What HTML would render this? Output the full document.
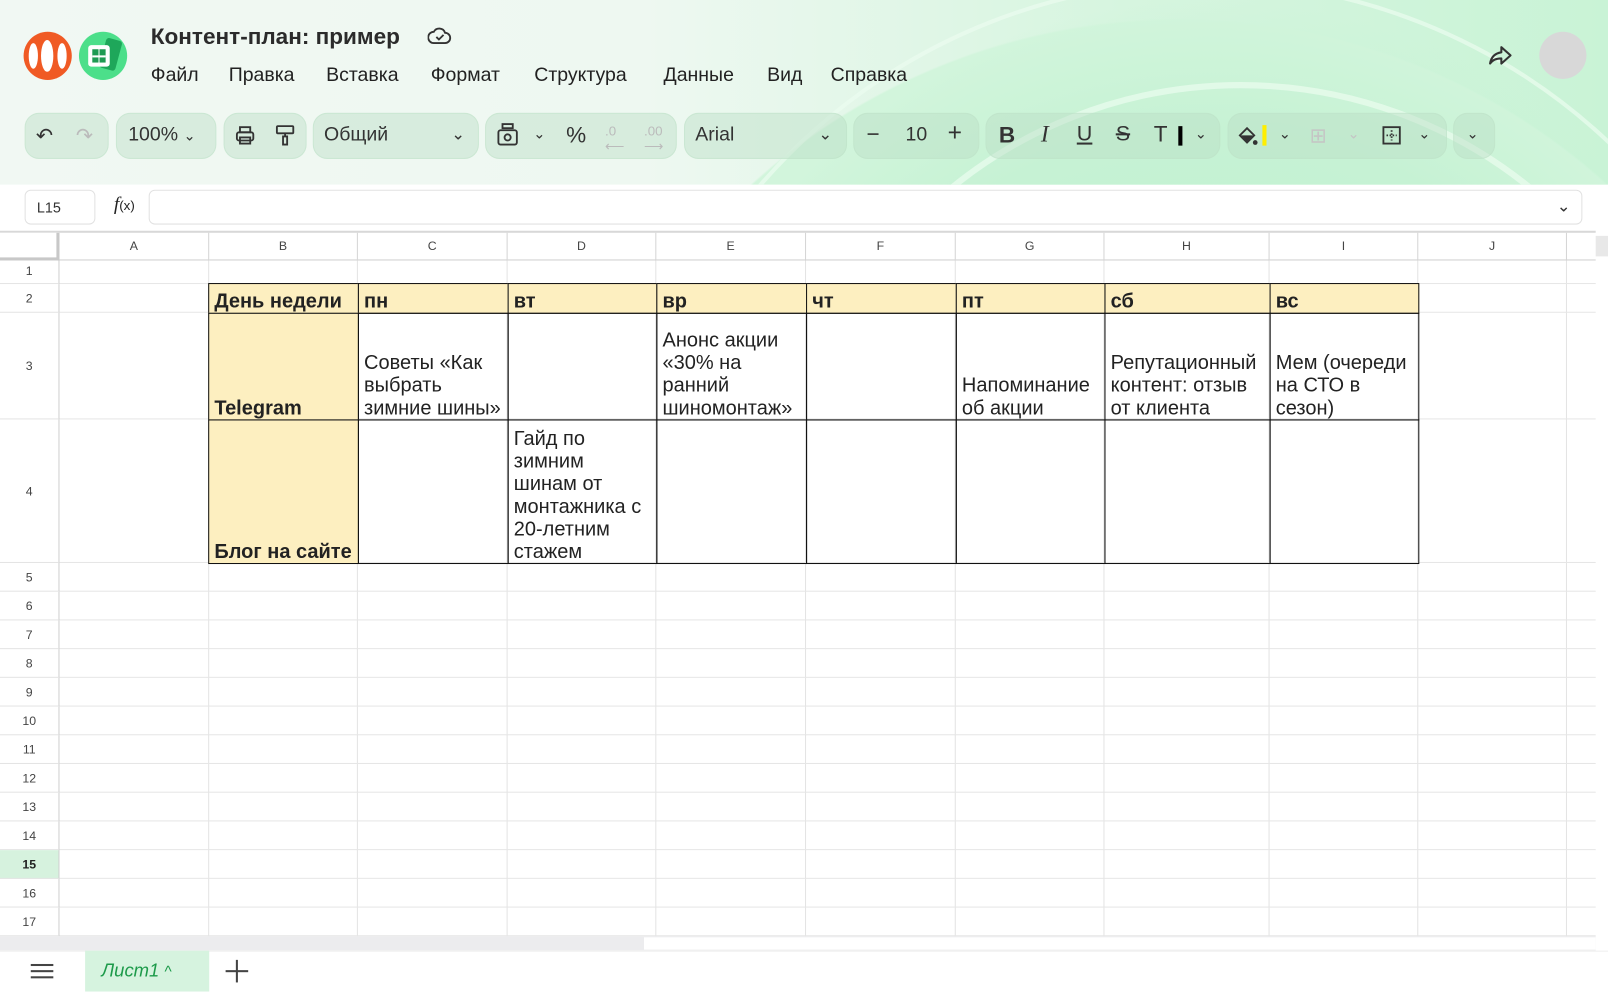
<!DOCTYPE html>
<html><head><meta charset="utf-8">
<style>
*{box-sizing:border-box;margin:0;padding:0}
html,body{width:1608px;height:992px;overflow:hidden;background:#fff}
#w{position:absolute;left:0;top:0;width:1568px;height:967px;transform:scale(1.02551);transform-origin:0 0;font-family:"Liberation Sans","Noto Sans CJK SC",sans-serif;color:#222;overflow:hidden}
.a{position:absolute}
#hd{left:0;top:0;width:1568px;height:180px;overflow:hidden;
background:radial-gradient(circle at 1180px 560px,#b9efcc 0,#c6f2d4 430px,rgba(220,248,228,0) 560px),
radial-gradient(circle at 1150px 640px,#d2f5dc 0,#d2f5dc 620px,rgba(0,0,0,0) 622px),
linear-gradient(90deg,#f1f8f3 0,#eef8f1 40%,#d6f5df 70%,#c9f3d6 100%)}
.ring{border-radius:50%;border:6px solid rgba(235,252,240,.7)}
.g{top:110px;height:45px;border-radius:14px;background:rgba(186,222,198,.45);border:1px solid rgba(190,225,200,.5)}
.ic{font-size:20px;color:#333;top:120px}
.menu{top:63px;font-size:19px;color:#222}
.col{top:227px;height:27px;border-right:1px solid #d5d5d5;border-bottom:1px solid #cfcfcf;font-size:12px;color:#444;text-align:center;line-height:27px}
.rh{left:0;width:58px;border-right:1px solid #cfcfcf;border-bottom:1px solid #e4e4e4;font-size:12px;color:#444;text-align:center}
.vl{top:254px;width:1px;height:659px;background:#e3e3e3}
.hl{left:58px;width:1498px;height:1px;background:#e6e6e6}
.c{border:1px solid #111;font-size:19.5px;line-height:22px;padding:0 3px 0 5px;display:flex;flex-direction:column;justify-content:flex-end;overflow:hidden}
.y{background:#fdefc0}
.b{font-weight:bold}
</style></head><body><div id="w">
<div id="hd" class="a">
  <div class="a ring" style="left:760px;top:80px;width:900px;height:900px;"></div>
  <div class="a ring" style="left:600px;top:-20px;width:1150px;height:1150px;border-width:4px"></div>
</div>
<div class="a" style="left:23px;top:31px;width:47px;height:47px;border-radius:50%;background:#f05a24"></div>
<div class="a" style="left:28px;top:42px;width:9px;height:25px;border-radius:50%;background:#fff"></div>
<div class="a" style="left:40px;top:39px;width:12px;height:31px;border-radius:50%;background:#fff"></div>
<div class="a" style="left:56px;top:42px;width:9px;height:25px;border-radius:50%;background:#fff"></div>
<div class="a" style="left:77px;top:31px;width:47px;height:47px;border-radius:50%;background:#4cdf8a"></div>
<div class="a" style="left:100px;top:38px;width:16px;height:30px;border-radius:3px;background:#1ea75a;transform:rotate(15deg)"></div>
<div class="a" style="left:86px;top:44px;width:21px;height:21px;border-radius:3px;background:#fff"></div>
<div class="a" style="left:90px;top:48px;width:13px;height:13px;background:linear-gradient(90deg,#1e9a52 45%,#fff 45%,#fff 55%,#1e9a52 55%)"></div>
<div class="a" style="left:90px;top:54px;width:13px;height:1.5px;background:#fff"></div>
<div class="a" style="left:147px;top:23px;font-size:22px;font-weight:bold;color:#2b2b2b">Контент-план: пример</div>
<svg class="a" style="left:417px;top:24px" width="24" height="22" viewBox="0 0 24 22"><path d="M6 18h11a5 5 0 0 0 0-10 6 6 0 0 0-11-1A5.5 5.5 0 0 0 6 18z" fill="none" stroke="#333" stroke-width="1.8"/><path d="M8.5 12l2.5 2.5 4.5-4.5" fill="none" stroke="#333" stroke-width="1.8"/></svg>
<div class="a menu" style="left:147px">Файл</div>
<div class="a menu" style="left:223px">Правка</div>
<div class="a menu" style="left:318px">Вставка</div>
<div class="a menu" style="left:420px">Формат</div>
<div class="a menu" style="left:521px">Структура</div>
<div class="a menu" style="left:647px">Данные</div>
<div class="a menu" style="left:748px">Вид</div>
<div class="a menu" style="left:810px">Справка</div>
<svg class="a" style="left:1450px;top:43px" width="26" height="22" viewBox="0 0 26 22"><path d="M14 3l9 8-9 8v-5C8 14 5 16 3 19c1-6 4-10 11-11z" fill="none" stroke="#333" stroke-width="2" stroke-linejoin="round"/></svg>
<div class="a" style="left:1501px;top:31px;width:46px;height:46px;border-radius:50%;background:#d8d8d8"></div>
<div class="a g" style="left:24px;width:82px"></div>
<div class="a g" style="left:113px;width:98px"></div>
<div class="a g" style="left:218px;width:81px"></div>
<div class="a g" style="left:305px;width:162px"></div>
<div class="a g" style="left:473px;width:187px"></div>
<div class="a g" style="left:667px;width:159px"></div>
<div class="a g" style="left:832px;width:123px"></div>
<div class="a g" style="left:961px;width:229px"></div>
<div class="a g" style="left:1197px;width:214px"></div>
<div class="a g" style="left:1417px;width:41px"></div>
<div class="a ic" style="left:35px">↶</div>
<div class="a ic" style="left:74px;color:#bbb">↷</div>
<div class="a ic" style="left:125px;font-size:19px;top:121px">100% <span style="font-size:14px">⌄</span></div>
<svg class="a" style="left:228px;top:121px" width="22" height="22" viewBox="0 0 22 22" fill="none" stroke="#333" stroke-width="1.8"><rect x="6" y="3" width="10" height="5"/><rect x="3" y="8" width="16" height="8" rx="2"/><rect x="6" y="13" width="10" height="6"/></svg>
<svg class="a" style="left:267px;top:120px" width="22" height="24" viewBox="0 0 22 24" fill="none" stroke="#333" stroke-width="1.8"><rect x="3" y="3" width="16" height="7" rx="1"/><path d="M11 10v3h-2v8h4v-8h-2"/></svg>
<div class="a ic" style="left:316px;font-size:19px;top:121px">Общий</div>
<div class="a ic" style="left:440px;font-size:16px;top:121px">⌄</div>
<svg class="a" style="left:483px;top:118px" width="24" height="26" viewBox="0 0 24 26" fill="none" stroke="#333" stroke-width="1.8"><rect x="7" y="3" width="10" height="4"/><rect x="3" y="9" width="18" height="14" rx="2"/><circle cx="12" cy="16" r="3"/></svg>
<div class="a ic" style="left:520px;font-size:14px;top:122px">⌄</div>
<div class="a ic" style="left:552px;font-size:22px;top:119px">%</div>
<div class="a ic" style="left:590px;font-size:13px;color:#bbb;top:120px">.0<br>⟵</div>
<div class="a ic" style="left:628px;font-size:13px;color:#bbb;top:120px">.00<br>⟶</div>
<div class="a ic" style="left:678px;font-size:19px;top:121px">Arial</div>
<div class="a ic" style="left:798px;font-size:16px;top:121px">⌄</div>
<div class="a ic" style="left:845px;font-size:22px;top:118px">−</div>
<div class="a ic" style="left:883px;font-size:19px;top:121px">10</div>
<div class="a ic" style="left:924px;font-size:24px;top:116px">+</div>
<div class="a ic" style="left:974px;font-weight:bold;font-size:22px;top:119px">B</div>
<div class="a ic" style="left:1015px;font-style:italic;font-family:'Liberation Serif',serif;font-size:23px;top:118px">I</div>
<div class="a ic" style="left:1050px;text-decoration:underline;font-size:21px;top:119px">U</div>
<div class="a ic" style="left:1088px;text-decoration:line-through;font-size:21px;top:119px">S</div>
<div class="a ic" style="left:1125px;font-size:22px;top:118px">T</div>
<div class="a" style="left:1149px;top:123px;width:4px;height:19px;background:#000"></div>
<div class="a ic" style="left:1165px;font-size:14px;top:122px">⌄</div>
<svg class="a" style="left:1205px;top:120px" width="22" height="24" viewBox="0 0 22 24"><path d="M4 12l7-7 7 7-7 7z" fill="none" stroke="#333" stroke-width="1.8"/><path d="M5 12h12l-6 6z" fill="#333"/><circle cx="19" cy="19" r="2.3" fill="#333"/></svg>
<div class="a" style="left:1231px;top:122px;width:4px;height:20px;background:#ffee00"></div>
<div class="a ic" style="left:1247px;font-size:14px;top:122px">⌄</div>
<div class="a ic" style="left:1277px;color:#c5c5c5;font-size:20px">⊞</div>
<div class="a ic" style="left:1314px;font-size:14px;color:#c5c5c5;top:122px">⌄</div>
<svg class="a" style="left:1346px;top:121px" width="22" height="22" viewBox="0 0 22 22" fill="none" stroke="#333" stroke-width="1.8"><rect x="3" y="3" width="16" height="16"/><path d="M11 6v10M6 11h10" stroke-dasharray="1.5 1.5"/></svg>
<div class="a ic" style="left:1383px;font-size:14px;top:122px">⌄</div>
<div class="a ic" style="left:1430px;font-size:14px;top:122px">⌄</div>
<div class="a" style="left:24px;top:185px;width:69px;height:34px;border:1px solid #e2e2e2;border-radius:6px;font-size:14px;line-height:32px;padding-left:11px;color:#333">L15</div>
<div class="a" style="left:111px;top:189px;font-size:19px;font-style:italic;font-family:'Liberation Serif',serif">f<span style="font-size:13px;font-style:normal;font-family:'Liberation Sans',sans-serif">(x)</span></div>
<div class="a" style="left:145px;top:185px;width:1398px;height:34px;border:1px solid #e2e2e2;border-radius:6px"></div>
<div class="a" style="left:1518px;top:191px;font-size:16px;color:#333">⌄</div>
<div class="a" style="left:0;top:225px;width:1556px;height:2px;background:#d8d8d8"></div>
<div class="a col" style="left:0;width:58px;border-right:3px solid #c8c8c8;border-bottom:3px solid #c8c8c8;background:#fff"></div>
<div class="a col" style="left:58px;width:146px">A</div>
<div class="a col" style="left:204px;width:145px">B</div>
<div class="a col" style="left:349px;width:146px">C</div>
<div class="a col" style="left:495px;width:145px">D</div>
<div class="a col" style="left:640px;width:146px">E</div>
<div class="a col" style="left:786px;width:146px">F</div>
<div class="a col" style="left:932px;width:145px">G</div>
<div class="a col" style="left:1077px;width:161px">H</div>
<div class="a col" style="left:1238px;width:145px">I</div>
<div class="a col" style="left:1383px;width:145px">J</div>
<div class="a" style="left:1528px;top:227px;width:28px;height:27px;border-bottom:1px solid #cfcfcf"></div>
<div class="a" style="left:1556px;top:230px;width:12px;height:20px;background:#e8e8e8"></div>
<div class="a vl" style="left:203px"></div><div class="a vl" style="left:348px"></div><div class="a vl" style="left:494px"></div><div class="a vl" style="left:639px"></div><div class="a vl" style="left:785px"></div><div class="a vl" style="left:931px"></div><div class="a vl" style="left:1076px"></div><div class="a vl" style="left:1237px"></div><div class="a vl" style="left:1382px"></div><div class="a vl" style="left:1527px"></div>
<div class="a hl" style="top:276px"></div><div class="a hl" style="top:304px"></div><div class="a hl" style="top:408px"></div><div class="a hl" style="top:548px"></div><div class="a hl" style="top:576px"></div><div class="a hl" style="top:604px"></div><div class="a hl" style="top:632px"></div><div class="a hl" style="top:660px"></div><div class="a hl" style="top:688px"></div><div class="a hl" style="top:716px"></div><div class="a hl" style="top:744px"></div><div class="a hl" style="top:772px"></div><div class="a hl" style="top:800px"></div><div class="a hl" style="top:828px"></div><div class="a hl" style="top:856px"></div><div class="a hl" style="top:884px"></div><div class="a hl" style="top:912px"></div>
<div class="a rh" style="top:254px;height:23px;line-height:21px">1</div>
<div class="a rh" style="top:277px;height:28px;line-height:28px">2</div>
<div class="a rh" style="top:305px;height:104px;line-height:104px">3</div>
<div class="a rh" style="top:409px;height:140px;line-height:140px">4</div>
<div class="a rh" style="top:549px;height:28px;line-height:28px">5</div>
<div class="a rh" style="top:577px;height:28px;line-height:28px">6</div>
<div class="a rh" style="top:605px;height:28px;line-height:28px">7</div>
<div class="a rh" style="top:633px;height:28px;line-height:28px">8</div>
<div class="a rh" style="top:661px;height:28px;line-height:28px">9</div>
<div class="a rh" style="top:689px;height:28px;line-height:28px">10</div>
<div class="a rh" style="top:717px;height:28px;line-height:28px">11</div>
<div class="a rh" style="top:745px;height:28px;line-height:28px">12</div>
<div class="a rh" style="top:773px;height:28px;line-height:28px">13</div>
<div class="a rh" style="top:801px;height:28px;line-height:28px">14</div>
<div class="a rh" style="top:829px;height:28px;line-height:28px;background:#d6f2de;font-weight:bold;color:#222">15</div>
<div class="a rh" style="top:857px;height:28px;line-height:28px">16</div>
<div class="a rh" style="top:885px;height:28px;line-height:28px">17</div>
<div class="a c y b" style="left:203px;top:276px;width:147px;height:30px">День недели</div>
<div class="a c y b" style="left:349px;top:276px;width:147px;height:30px">пн</div>
<div class="a c y b" style="left:495px;top:276px;width:146px;height:30px">вт</div>
<div class="a c y b" style="left:640px;top:276px;width:147px;height:30px">вр</div>
<div class="a c y b" style="left:786px;top:276px;width:147px;height:30px">чт</div>
<div class="a c y b" style="left:932px;top:276px;width:146px;height:30px">пт</div>
<div class="a c y b" style="left:1077px;top:276px;width:162px;height:30px">сб</div>
<div class="a c y b" style="left:1238px;top:276px;width:146px;height:30px">вс</div>
<div class="a c y b" style="left:203px;top:305px;width:147px;height:105px">Telegram</div>
<div class="a c" style="left:349px;top:305px;width:147px;height:105px">Советы «Как<br>выбрать<br>зимние шины»</div>
<div class="a c" style="left:495px;top:305px;width:146px;height:105px"></div>
<div class="a c" style="left:640px;top:305px;width:147px;height:105px">Анонс акции<br>«30% на<br>ранний<br>шиномонтаж»</div>
<div class="a c" style="left:786px;top:305px;width:147px;height:105px"></div>
<div class="a c" style="left:932px;top:305px;width:146px;height:105px">Напоминание<br>об акции</div>
<div class="a c" style="left:1077px;top:305px;width:162px;height:105px">Репутационный<br>контент: отзыв<br>от клиента</div>
<div class="a c" style="left:1238px;top:305px;width:146px;height:105px">Мем (очереди<br>на СТО в<br>сезон)</div>
<div class="a c y b" style="left:203px;top:409px;width:147px;height:141px">Блог на сайте</div>
<div class="a c" style="left:349px;top:409px;width:147px;height:141px"></div>
<div class="a c" style="left:495px;top:409px;width:146px;height:141px">Гайд по<br>зимним<br>шинам от<br>монтажника с<br>20-летним<br>стажем</div>
<div class="a c" style="left:640px;top:409px;width:147px;height:141px"></div>
<div class="a c" style="left:786px;top:409px;width:147px;height:141px"></div>
<div class="a c" style="left:932px;top:409px;width:146px;height:141px"></div>
<div class="a c" style="left:1077px;top:409px;width:162px;height:141px"></div>
<div class="a c" style="left:1238px;top:409px;width:146px;height:141px"></div>
<div class="a" style="left:0;top:913px;width:1556px;height:14px;background:#ececee"></div>
<div class="a" style="left:628px;top:914px;width:928px;height:12px;background:#fff"></div>
<div class="a" style="left:0;top:927px;width:1568px;height:40px;background:#fff;border-top:1px solid #eee"></div>
<div class="a" style="left:30px;top:940px;width:22px;height:2px;background:#444;box-shadow:0 6px 0 #444,0 12px 0 #444"></div>
<div class="a" style="left:83px;top:927px;width:121px;height:40px;background:#d6f3df"></div>
<div class="a" style="left:99px;top:936px;font-size:18px;color:#1d9a4a;font-style:italic">Лист1 <span style="font-style:normal;font-size:15px">^</span></div>
<div class="a" style="left:220px;top:946px;width:22px;height:2px;background:#444"></div>
<div class="a" style="left:230px;top:936px;width:2px;height:22px;background:#444"></div>
</div></body></html>
